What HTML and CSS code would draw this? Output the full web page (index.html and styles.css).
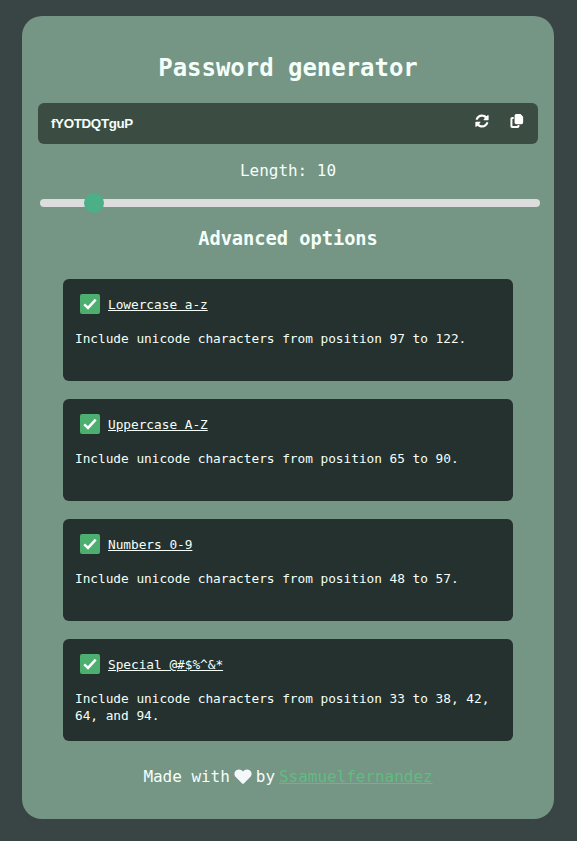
FILE: index.html
```html
<!DOCTYPE html>
<html lang="en">
<head>
<meta charset="utf-8">
<title>Password generator</title>
<link rel="stylesheet" href="styles.css">
</head>
<body>
<svg class="defs" width="0" height="0">
  <symbol id="check" viewBox="0 0 20 20"><path d="M4.2 10.3 L8 13.9 L15.7 5.7" fill="none" stroke="#fff" stroke-width="2.5"/></symbol>
</svg>
<main class="card">
  <h2 class="title">Password generator</h2>
  <div class="password">
    <span class="value">fYOTDQTguP</span>
    <svg class="icon refresh" viewBox="0 0 512 512"><path d="M105 203C126 142 184 99 252 99c44 0 83 18 112 46l-43 43c-14 14-4 37 15 37h142c12 0 21-9 21-21V62c0-19-23-28-36-15l-38 37C382 43 321 16 252 16 145 16 55 85 24 181c-5 15 5 29 21 29h49c5 0 9-3 11-7zM407 309c-21 61-79 104-147 104-44 0-83-18-112-46l43-43c14-14 4-37-15-37H34c-12 0-21 9-21 21v142c0 19 23 28 36 15l38-37c43 41 104 68 173 68 107 0 197-69 228-165 5-15-5-29-21-29h-49c-5 0-9 3-11 7z"/></svg>
    <svg class="icon copy" viewBox="0 0 512 512"><path d="M232 0c-35 0-64 29-64 64v244c0 35 29 64 64 64h184c35 0 64-29 64-64V96L384 0zM80 112c-35 0-64 29-64 64v272c0 35 29 64 64 64h200c35 0 64-29 64-64v-42h-72v34H88V184h46v-72z"/></svg>
  </div>
  <p class="length">Length: 10</p>
  <div class="slider"><span class="thumb"></span></div>
  <h3 class="subtitle">Advanced options</h3>
  <div class="options">
    <section class="option">
      <div class="option-head"><svg class="checkbox"><use href="#check"/></svg><span class="name">Lowercase a-z</span></div>
      <p class="text">Include unicode characters from position 97 to 122.</p>
    </section>
    <section class="option">
      <div class="option-head"><svg class="checkbox"><use href="#check"/></svg><span class="name">Uppercase A-Z</span></div>
      <p class="text">Include unicode characters from position 65 to 90.</p>
    </section>
    <section class="option">
      <div class="option-head"><svg class="checkbox"><use href="#check"/></svg><span class="name">Numbers 0-9</span></div>
      <p class="text">Include unicode characters from position 48 to 57.</p>
    </section>
    <section class="option">
      <div class="option-head"><svg class="checkbox"><use href="#check"/></svg><span class="name">Special @#$%^&amp;*</span></div>
      <p class="text">Include unicode characters from position 33 to 38, 42, 64, and 94.</p>
    </section>
  </div>
  <footer class="footer"><span>Made with</span><svg class="heart" viewBox="0 0 18 18"><path d="M9 15.9 Q8.6 15.9 7.9 15.2 L2 9.3C-1.4 5.6 1.2 1.6 4.6 1.4 6.6 1.3 8 2.2 9 3.5 10 2.2 11.4 1.3 13.4 1.4 16.8 1.6 19.4 5.6 16 9.3L10.1 15.2Q9.4 15.9 9 15.9z"/></svg><span>by</span><a class="author" href="#">Ssamuelfernandez</a></footer>
</main>
</body>
</html>
```
FILE: styles.css
```css
* {
  box-sizing: border-box;
}

body {
  margin: 0;
  height: 841px;
  padding: 16px 23px 22px 22px;
  background: #394444;
  color: #f5fffa;
  font-family: "DejaVu Sans Mono", monospace;
  font-size: 16px;
  letter-spacing: -0.002em;
}

.defs {
  display: block;
}

.card {
  height: 803px;
  padding: 36px 16px 0;
  border-radius: 20px;
  background: #759585;
}

.title {
  margin: 0 0 19px;
  font-size: 24px;
  line-height: 32px;
  text-align: center;
}

.password {
  display: flex;
  height: 41px;
  padding: 0 14px 0 13px;
  border-radius: 6px;
  background: #3b4d43;
}

.value {
  flex: 1;
  font: bold 13.33px/41px "Liberation Sans", sans-serif;
  letter-spacing: -0.32px;
}

.icon {
  width: 14px;
  height: 14px;
  margin-top: 11px;
  fill: #fff;
}

.refresh {
  margin-right: 21px;
}

.length {
  margin: 16px 0 18px;
  line-height: 21px;
  text-align: center;
}

.slider {
  display: flex;
  align-items: center;
  width: 500px;
  height: 8px;
  margin-left: 2px;
  padding-left: 44px;
  border-radius: 4px;
  background: #dcdddc;
}

.thumb {
  flex: none;
  width: 20px;
  height: 20px;
  border-radius: 50%;
  background: #4caf88;
}

.subtitle {
  margin: 19px 0 28px;
  font-size: 18.72px;
  line-height: 25px;
  text-align: center;
}

.options {
  display: grid;
  gap: 18px;
  padding: 0 25px;
}

.option {
  height: 102px;
  padding: 15px 12px 0;
  border-radius: 6px;
  background: #24312e;
  font-size: 12.8px;
}

.option-head {
  display: flex;
  gap: 8px;
  height: 20px;
  padding-left: 5px;
  line-height: 21px;
}

.checkbox {
  width: 20px;
  height: 20px;
  border-radius: 2px;
  background: #4caf70;
}

.name {
  text-decoration: underline;
}

.text {
  margin: 16px 0 0;
  line-height: 17px;
}

.footer {
  display: flex;
  justify-content: center;
  align-items: center;
  gap: 4px;
  margin-top: 25px;
  line-height: 21px;
}

.heart {
  width: 18px;
  height: 18px;
  fill: #f5f8fa;
}

.author {
  color: #5fbd80;
}
```
